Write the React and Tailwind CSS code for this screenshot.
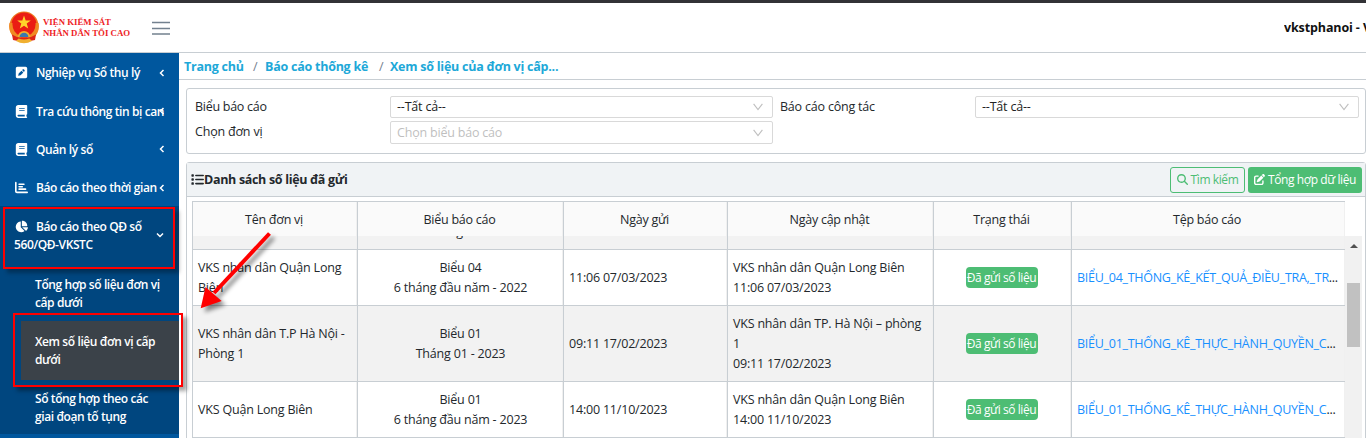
import React from 'react';
import { FaSquarePen, FaBook, FaChartBar, FaChartPie, FaList, FaPenToSquare, FaMagnifyingGlass } from 'react-icons/fa6';

const cols = 'grid grid-cols-[165px_206px_164px_206px_138px_273px]';

function Emblem() {
  return (
    <svg viewBox="0 0 32 33" className="h-[33px] w-8 shrink-0">
      <circle cx="16" cy="15" r="14.6" fill="#ee7a20" />
      <circle cx="16" cy="14" r="12.6" fill="#ea1c14" />
      <path d="M1.5 12 A15 15 0 0 0 10 29 L13 25.5 A13 13 0 0 1 4.5 12 Z" fill="#f08a22" />
      <path d="M30.5 12 A15 15 0 0 1 22 29 L19 25.5 A13 13 0 0 0 27.5 12 Z" fill="#f08a22" />
      <path d="M16 4.5 L17.7 9.4 L22.8 9.5 L18.7 12.6 L20.2 17.6 L16 14.7 L11.8 17.6 L13.3 12.6 L9.2 9.5 L14.3 9.4 Z" fill="#ffd42a" />
      <path d="M9.8 26 a6.2 6 0 0 1 12.4 0 z" fill="#f5b02a" />
      <path d="M11.6 26 a4.4 4.2 0 0 1 8.8 0 z" fill="#3b79ae" />
      <path d="M4 23.5 L9 26 Q16 28 23 26 L28 23.5 L27 29 L22 30 Q16 32.5 10 30 L5 29 Z" fill="#dd2417" />
      <path d="M8 30 Q16 34.5 24 30 L21.5 27.6 Q16 29.5 10.5 27.6 Z" fill="#f0b030" />
    </svg>
  );
}

function Chevron({ down }) {
  return (
    <svg viewBox="0 0 8 8" className="size-2 shrink-0" fill="none" stroke="#fff" strokeWidth="1.5">
      <path d={down ? 'M1 2.5 L4 5.5 L7 2.5' : 'M5.5 1 L2.5 4 L5.5 7'} />
    </svg>
  );
}

function MenuItem({ icon: Icon, label }) {
  return (
    <div className="flex h-[38.4px] items-center pl-[15px] pr-[13px] pt-px">
      <Icon className="size-[13px] shrink-0" />
      <span className="ml-2 w-0 flex-1 whitespace-nowrap pt-px">{label}</span>
      <Chevron />
    </div>
  );
}

function Select({ value, placeholder, className }) {
  return (
    <div className={`flex items-center justify-between rounded-[2px] border border-[#d9d9d9] bg-white pl-1.5 pr-[9px] ${className}`}>
      <span className={placeholder ? 'text-[#bfbfbf]' : 'text-[#222]'}>{value}</span>
      <svg viewBox="0 0 10 8" className="h-2 w-2.5" fill="none" stroke="#bfbfbf" strokeWidth="1.1">
        <path d="M0.6 0.8 L5 6.6 L9.4 0.8" />
      </svg>
    </div>
  );
}

function Cell({ children, center, last }) {
  return (
    <div className={`flex min-w-0 flex-col justify-center border-r pl-[5px] ${last ? 'border-[#f0f0f0]' : 'border-[#c8ced3] shadow-[inset_-1px_0_0_#f0f0f0]'} ${center ? 'items-center pr-[5px] text-center' : ''}`}>
      {children}
    </div>
  );
}

const rows = [
  { unit: [], form: ['9 tháng - 2022'], sent: '', upd: ['11:06 07/03/2023'], cls: 'h-9 bg-[#f2f2f2]' },
  { unit: ['VKS nhân dân Quận Long', 'Biên'], form: ['Biểu 04', '6 tháng đầu năm - 2022'], sent: '11:06 07/03/2023', upd: ['VKS nhân dân Quận Long Biên', '11:06 07/03/2023'], file: 'BIỂU_04_THỐNG_KÊ_KẾT_QUẢ_ĐIỀU_TRA,_TR', cls: 'h-14 bg-white' },
  { unit: ['VKS nhân dân T.P Hà Nội -', 'Phòng 1'], form: ['Biểu 01', 'Tháng 01 - 2023'], sent: '09:11 17/02/2023', upd: ['VKS nhân dân TP. Hà Nội – phòng', '1', '09:11 17/02/2023'], file: 'BIỂU_01_THỐNG_KÊ_THỰC_HÀNH_QUYỀN_C', cls: 'h-[76px] bg-[#f2f2f2]' },
  { unit: ['VKS Quận Long Biên'], form: ['Biểu 01', '6 tháng đầu năm - 2023'], sent: '14:00 11/10/2023', upd: ['VKS nhân dân Quận Long Biên', '14:00 11/10/2023'], file: 'BIỂU_01_THỐNG_KÊ_THỰC_HÀNH_QUYỀN_C', cls: 'h-14 bg-white' },
];

const lines = (list) => list.map((t, i) => <div key={i} className="whitespace-nowrap">{t}</div>);

function Row({ r }) {
  return (
    <div className={`${cols} ${r.cls} border-b border-[#c8ced3]`}>
      <Cell>{lines(r.unit)}</Cell>
      <Cell center>{lines(r.form)}</Cell>
      <Cell>{r.sent}</Cell>
      <Cell>{lines(r.upd)}</Cell>
      <Cell center>
        {r.file && (
          <span className="mr-0.5 flex h-[21px] w-[72px] items-center justify-center whitespace-nowrap rounded bg-[#4dbd74] text-[12px] tracking-[-0.42px] text-white">Đã gửi số liệu</span>
        )}
      </Cell>
      <Cell last>
        {r.file && (
          <div className="whitespace-nowrap tracking-[-0.27px]"><span className="text-[#1890ff]">{r.file}</span>...</div>
        )}
      </Cell>
    </div>
  );
}

export default function App() {
  return (
    <div className="relative flex h-[438px] w-[1366px] flex-col overflow-hidden bg-white font-['Open_Sans','Noto_Sans',sans-serif] text-[12.5px] leading-5 tracking-[-0.2px] text-[#23282c]">
      <header className="flex h-[53px] shrink-0 items-center border-b border-t-[3px] border-b-[#c8ced3] border-t-[#323236] pl-2">
        <Emblem />
        <div className="ml-[3px] w-[109px] whitespace-nowrap pt-px font-['Liberation_Serif',serif] text-[8.8px] font-bold leading-[11px] tracking-normal text-[#ee1c25]">
          <div>VIỆN KIỂM SÁT</div>
          <div>NHÂN DÂN TỐI CAO</div>
        </div>
        <svg viewBox="0 0 18 14" className="h-3.5 w-[18px]" stroke="#73818f" strokeWidth="1.3">
          <path d="M0 1.5H18M0 7.5H18M0 13H18" />
        </svg>
        <div className="ml-auto w-[82px] overflow-hidden whitespace-nowrap text-[12.5px] font-bold tracking-[-0.12px] text-[#111]">vkstphanoi - V</div>
      </header>

      <div className="flex min-h-0 flex-1">
        <aside className="w-[179px] shrink-0 overflow-hidden bg-[#00579e] text-[12px] font-semibold tracking-[-0.4px] text-white">
          <MenuItem icon={FaSquarePen} label="Nghiệp vụ Sổ thụ lý" />
          <MenuItem icon={FaBook} label="Tra cứu thông tin bị can" />
          <MenuItem icon={FaBook} label="Quản lý sổ" />
          <MenuItem icon={FaChartBar} label="Báo cáo theo thời gian" />
          <div className="-mt-px h-[228px] bg-[#00467f] leading-[18px]">
            <div className="flex h-[58px] items-center justify-between pl-3.5 pr-[15px]">
              <div className="pt-0.5">
                <div className="flex items-center whitespace-nowrap"><FaChartPie className="ml-px mr-2 size-[13px]" />Báo cáo theo QĐ số</div>
                <div className="whitespace-nowrap">560/QĐ-VKSTC</div>
              </div>
              <Chevron down />
            </div>
            <div className="ml-[21px] flex h-[57px] flex-col justify-center whitespace-nowrap pl-3.5 pt-[3px]"><div>Tổng hợp số liệu đơn vị</div><div>cấp dưới</div></div>
            <div className="ml-[21px] flex h-[59px] flex-col justify-center whitespace-nowrap bg-[#3b4249] pl-3.5 pt-px"><div>Xem số liệu đơn vị cấp</div><div>dưới</div></div>
            <div className="ml-[21px] flex h-[54px] flex-col justify-center whitespace-nowrap pl-3.5 pt-0.5"><div>Sổ tổng hợp theo các</div><div>giai đoạn tố tụng</div></div>
          </div>
        </aside>

        <main className="min-w-0 flex-1">
          <nav className="flex h-[27px] items-center border-b border-[#c8ced3] pl-[5px] pt-0.5 font-bold tracking-[-0.24px] text-[#20a8d8]">
            <span className="w-[69px]">Trang chủ</span>
            <span className="w-3 font-normal text-[#73818f]">/</span>
            <span className="w-[114px]">Báo cáo thống kê</span>
            <span className="w-[11px] font-normal text-[#73818f]">/</span>
            <span>Xem số liệu của đơn vị cấp...</span>
          </nav>

          <section className="ml-[7px] mt-2 grid h-[66px] grid-cols-[195px_390px_195px_384px] content-start rounded-[3px] border border-[#c8ced3] pl-2 pt-[7px]">
            <span className="pt-px tracking-[-0.28px]">Biểu báo cáo</span>
            <Select className="h-[22px] w-[383px]" value="--Tất cả--" />
            <span className="pt-px">Báo cáo công tác</span>
            <Select className="h-[22px] w-[384px]" value="--Tất cả--" />
            <span className="mt-[3px] pt-px">Chọn đơn vị</span>
            <Select placeholder className="mt-[3px] h-[23px] w-[383px]" value="Chọn biểu báo cáo" />
          </section>

          <section className="ml-[7px] mt-2 h-[290px] rounded-t-[3px] border border-[#c8ced3]">
            <div className="flex h-[34px] items-center border-b border-[#c8ced3] bg-[#f0f3f5] pl-1 pr-[3px]">
              <FaList className="size-[13px]" />
              <span className="font-bold tracking-[-0.32px]">Danh sách số liệu đã gửi</span>
              <button className="ml-auto flex h-[26px] w-[75px] items-center justify-center gap-[3px] whitespace-nowrap rounded-[3px] border border-[#4dbd74] text-[12px] tracking-[-0.4px] text-[#4dbd74]"><FaMagnifyingGlass className="size-[11px]" />Tìm kiếm</button>
              <button className="ml-[3px] flex h-[26px] w-[114px] items-center justify-center gap-[3px] whitespace-nowrap rounded-[3px] bg-[#4dbd74] text-[12px] tracking-[-0.42px] text-white"><FaPenToSquare className="size-[11px]" />Tổng hợp dữ liệu</button>
            </div>
            <div className="ml-[5px] mt-1 flex h-[250px] w-[1170px] flex-col">
              <div className={`${cols} h-[35px] w-[1153px] shrink-0 border-l border-t border-[#c8ced3] bg-[#fafafa] font-medium tracking-[-0.25px]`}>
                {['Tên đơn vị', 'Biểu báo cáo', 'Ngày gửi', 'Ngày cập nhật', 'Trạng thái', 'Tệp báo cáo'].map((h, i) => (
                  <Cell key={h} center last={i === 5}><span className="pr-0.5 pt-0.5">{h}</span></Cell>
                ))}
              </div>
              <div className="flex min-h-0 flex-1">
                <div className="w-[1153px] overflow-hidden border-l border-[#c8ced3]">
                  <div className="-mt-[22px]">{rows.map((r, i) => <Row key={i} r={r} />)}</div>
                </div>
                <div className="flex w-[17px] flex-col items-center bg-[#f1f1f1]">
                  <svg viewBox="0 0 8 4" className="mt-2 h-1 w-2 shrink-0"><path d="M0 4L4 0L8 4Z" fill="#505050" /></svg>
                  <div className="mt-[35px] h-16 w-[13px] shrink-0 bg-[#c1c1c1]" />
                </div>
              </div>
            </div>
          </section>
        </main>
      </div>

      <div className="absolute left-[3px] top-[207px] h-[62px] w-[172px] border-2 border-[#ff0000] shadow-[4px_4px_4px_rgba(0,0,0,0.3)]" />
      <div className="absolute left-[13px] top-[313px] h-[74px] w-[170px] border-2 border-[#ff0000] shadow-[4px_4px_4px_rgba(0,0,0,0.35)]" />
      <svg viewBox="0 0 90 92" className="absolute left-[190px] top-[228px] h-[92px] w-[90px] drop-shadow-[4px_4px_2px_rgba(0,0,0,0.45)]">
        <path d="M79.5 5.5 L24 65" stroke="#ff0000" strokeWidth="4" />
        <path d="M10.7 80.3 L15.5 59 L31.7 73 Z" fill="#ff0000" />
      </svg>
    </div>
  );
}
